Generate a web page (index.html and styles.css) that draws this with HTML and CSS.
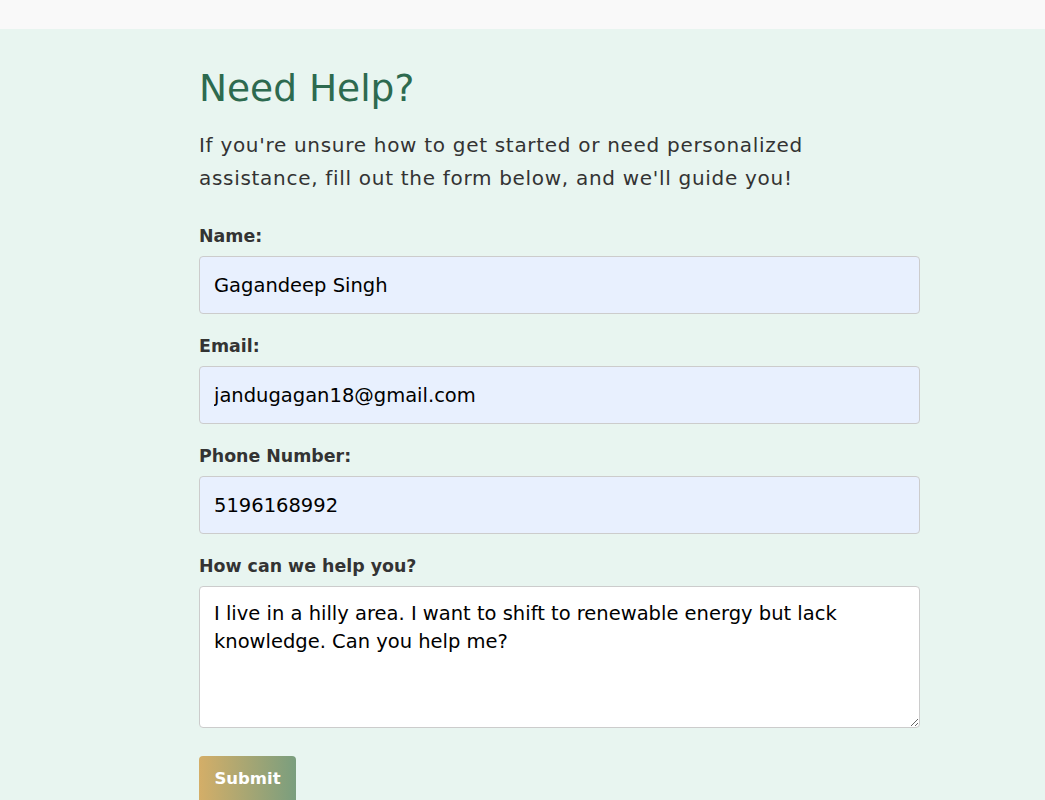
FILE: index.html
```html
<!DOCTYPE html>
<html lang="en">
<head>
<meta charset="utf-8">
<title>Need Help?</title>
<link rel="stylesheet" href="styles.css">
</head>
<body>
<div class="topbar"></div>
<section class="help">
  <div class="container">
    <h1 class="title">Need Help?</h1>
    <p class="intro">If you're unsure how to get started or need personalized assistance, fill out the form below, and we'll guide you!</p>
    <form class="form">
      <div class="group">
        <label class="label" for="name">Name:</label>
        <input class="field autofilled" id="name" type="text" value="Gagandeep Singh">
      </div>
      <div class="group">
        <label class="label" for="email">Email:</label>
        <input class="field autofilled" id="email" type="email" value="jandugagan18@gmail.com">
      </div>
      <div class="group">
        <label class="label" for="phone">Phone Number:</label>
        <input class="field autofilled" id="phone" type="tel" value="5196168992">
      </div>
      <div class="group">
        <label class="label" for="msg">How can we help you?</label>
        <textarea class="field area" id="msg">I live in a hilly area. I want to shift to renewable energy but lack knowledge. Can you help me?</textarea>
      </div>
      <button class="submit" type="button">Submit</button>
    </form>
  </div>
</section>
</body>
</html>
```
FILE: styles.css
```css
html, body {
  margin: 0;
  padding: 0;
}
body {
  font-family: "DejaVu Sans", "Liberation Sans", sans-serif;
  background: #e8f5f0;
  color: #333333;
  overflow: hidden;
}
.topbar {
  height: 29px;
  background: #f9f9f9;
}
.help {
  background: #e8f5f0;
  padding: 36px 0 40px;
}
.container {
  width: 721px;
  margin-left: 199px;
}
.title {
  margin: 0;
  font-size: 37.5px;
  font-weight: normal;
  line-height: 46px;
  color: #2d6a4f;
}
.intro {
  margin: 18px 0 0;
  font-size: 20px;
  letter-spacing: 0.7px;
  line-height: 33px;
  color: #333333;
  max-width: 640px;
}
.form {
  margin-top: 29px;
}
.group {
  margin-bottom: 20px;
}
.label {
  display: block;
  font-size: 17.4px;
  font-weight: bold;
  line-height: 24px;
  margin-bottom: 8px;
  color: #333333;
}
.field {
  display: block;
  box-sizing: border-box;
  width: 721px;
  height: 58px;
  padding: 0 14px;
  border: 1px solid #cccccc;
  border-radius: 4px;
  font-family: "DejaVu Sans", "Liberation Sans", sans-serif;
  font-size: 19.5px;
  color: #000000;
  background: #ffffff;
  margin: 0;
}
.autofilled {
  background: #e8f0fe;
}
.area {
  height: 142px;
  padding: 13px 14px;
  line-height: 28px;
  resize: vertical;
}
.submit {
  margin-top: 28px;
  display: block;
  width: 97px;
  height: 48px;
  border: none;
  border-radius: 4px;
  background: linear-gradient(90deg, #d4ae68, #7a9e7e);
  color: #ffffff;
  font-family: "DejaVu Sans", "Liberation Sans", sans-serif;
  font-size: 16.5px;
  font-weight: bold;
  padding: 0 0 4px;
}
```
